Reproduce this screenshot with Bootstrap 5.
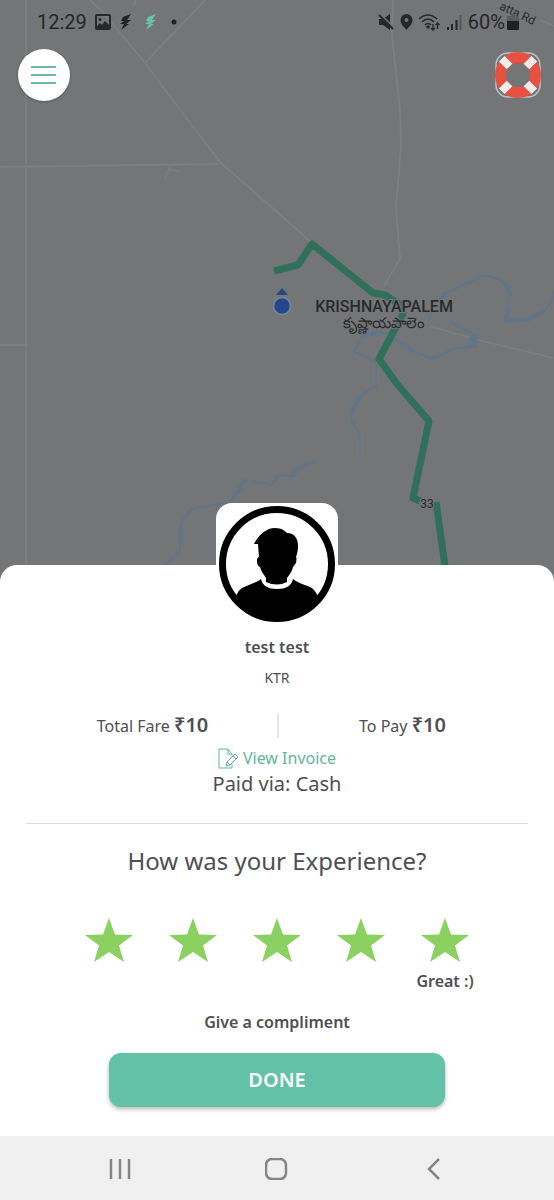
<!DOCTYPE html>
<html lang="en">
<head>
<meta charset="utf-8">
<meta name="viewport" content="width=device-width, initial-scale=1">
<title>Rate your ride</title>
<link href="https://cdn.jsdelivr.net/npm/bootstrap@5.3.0/dist/css/bootstrap.min.css" rel="stylesheet">
<style>
  body { font-family: "Noto Sans", "Liberation Sans", sans-serif; color: #4e4f53; background: #fff; }
  .screen { background: #737577; overflow: hidden; }
  .map-label { font-family: Roboto, "Noto Sans", sans-serif; fill: #292a2d; }
  .status { font-family: Roboto, sans-serif; font-size: 20px; line-height: 24px; color: #262729; padding: 10px 35px 0 37px; }
  .status-icons { gap: 6px; }
  .status-end { gap: 2px; }
  .tools { padding: 15px 13px 0 18px; }
  .menu-btn { width: 52px; height: 52px; background: #fff; box-shadow: 0 1px 3px rgba(0,0,0,.25); }
  .sheet { background: #fff; border-radius: 17px 17px 0 0; padding: 0 26px 29px; }
  .avatar { width: 122px; height: 122px; margin-top: -62px; border-radius: 16px; background: #fff; }
  .t-small { font-size: 14px; line-height: 20px; }
  .t-body { font-size: 16px; line-height: 20px; }
  .t-strong { font-weight: 600; }
  .t-price { font-size: 20px; line-height: 24px; font-weight: 600; }
  .t-link { font-size: 16px; line-height: 24px; color: #62b59a; }
  .t-paid { font-size: 20px; line-height: 28px; }
  .t-question { font-size: 24px; line-height: 32px; font-weight: 400; }
  .driver { margin-top: 12px; }
  .vehicle { margin-top: 11px; }
  .fares { padding: 0 2px; margin-top: 25px; }
  .fare-cell + .fare-cell { border-left: 2px solid #e6e6e8; }
  .rule { border-top: 1px solid #dedee0; opacity: 1; margin: 25px 0 21px; }
  .stars { max-width: 420px; margin-top: 41px; }
  .rating-note { margin-top: 9px; }
  .compliment { margin-top: 21px; }
  .done { width: 67%; height: 54px; border-radius: 12px; background: #62c1a6; color: #fff; font-size: 20px; font-weight: 600; box-shadow: 0 2px 4px rgba(0,0,0,.3); margin-top: 21px; }
  .done:hover { background: #55b498; color: #fff; }
  .sysnav { background: #f0f0f0; height: 64px; padding: 0 41px; }
</style>
</head>
<body>
<div class="screen position-relative min-vh-100 d-flex flex-column">

  <svg class="position-absolute top-0 start-0 w-100 h-100" viewBox="0 0 554 1200" preserveAspectRatio="xMidYMin slice" role="img" aria-label="Route map">
    <g fill="none" stroke="#7c7e80" stroke-width="2">
      <path d="M26 0V580M0 167L218 164M0 345H28M90 0L103 12L145 63L181 111L221 163L277 212L313 244M205 0L145 63M136 0L134 6M393 0L392 35L400 110L401 145L396 210L400 259L384 286"/>
      <path d="M430 326L478 340L554 358M540 20L554 26M169 167L165 180M169 169L180 172" stroke-width="1.500"/>
    </g>
    <g fill="none" stroke="#60758a" stroke-width="2" stroke-linejoin="round">
      <path d="M429 321L434 306L444 294L484 275L502 280L510 295L505 321L529 320L544 312L551 302L554 291"/>
      <path d="M450 322L472 333L473 346L453 349L433 359L413 351L391 337M391 334L376 332L362 337L354 352L376 361L376 386L360 396L351 414V421L360 434V456"/>
      <path d="M314 461L299 468L292 476L278 475L272 485L252 481M246 479L231 502L191 509L181 523L180 551L165 565L155 575"/>
      <path d="M246 479L236 494M505 320L510 308M505 321L529 319L544 311M510 295L506 281M181 526L181 545M307 464L299 468L292 476M362 336L378 332M391 337L413 351M444 294L440 303M360 396L351 414" stroke-width="4" stroke-linejoin="bevel"/>
      <path d="M473 334V348" stroke-width="7"/>
    </g>
    <g fill="none" stroke="#30705a" stroke-width="7" stroke-linejoin="round">
      <path d="M274 271L298 265L312 244L373 293L385 295L402 306L403 314L379 359L397 384L429 421L413 498L420 501"/>
      <path d="M436 502L447 580"/>
    </g>
    <circle cx="282" cy="306" r="8.500" fill="#254789" stroke="#77899f" stroke-width="1.500"/>
    <path d="M276 295L282 288L288 295Z" fill="#294783"/>
    <g class="map-label" text-anchor="middle" stroke="#737577" stroke-width="2" paint-order="stroke">
      <text x="384" y="312" font-size="16" font-weight="500">KRISHNAYAPALEM</text>
      <text x="384" y="328" font-size="15">కృష్ణాయపాలెం</text>
      <text x="427" y="508" font-size="12">33</text>
      <text x="516" y="17" font-size="12" transform="rotate(25 516 17)">atta Rd</text>
    </g>
  </svg>

  <header class="position-relative">
    <div class="status d-flex align-items-center justify-content-between">
      <div class="d-flex align-items-center gap-2">
        <span>12:29</span>
        <svg width="16" height="16" viewBox="0 0 16 16"><path fill="#262729" fill-rule="evenodd" d="M2 0H14Q16 0 16 2V14Q16 16 14 16H2Q0 16 0 14V2Q0 0 2 0ZM2 2V12L5 9L7 11L10 7L14 11V2ZM5 4A1.500 1.500 0 1 1 5 7A1.500 1.500 0 1 1 5 4Z"/></svg>
        <svg width="13" height="16" viewBox="0 0 13 16"><path fill="#202124" d="M12 0L4 3L2 7H5L1 10H5L2 16L10 10H7L12 6H8Z"/></svg>
        <svg class="ms-1" width="13" height="16" viewBox="0 0 13 16"><path fill="#65c3a7" d="M12 0L4 3L2 7H5L1 10H5L2 16L10 10H7L12 6H8Z"/></svg>
        <svg class="ms-1" width="8" height="8" viewBox="0 0 8 8"><circle cx="5" cy="4" r="2.500" fill="#202124"/></svg>
      </div>
      <div class="status-icons d-flex align-items-center">
        <svg width="16" height="16" viewBox="0 0 16 16"><path fill="#262729" d="M1 5H5L12 0V16L5 11H1Z"/><path d="M2 0L16 14" stroke="#737577" stroke-width="2"/><path d="M1 1L15 15" stroke="#262729" stroke-width="2"/></svg>
        <svg width="13" height="16" viewBox="0 0 13 16"><path fill="#262729" fill-rule="evenodd" d="M6.500 0A6 6 0 0 1 12.500 6C12.500 10 9 13 6.500 16C4 13 .5 10 .5 6A6 6 0 0 1 6.500 0ZM6.500 4A2 2 0 1 0 6.500 8A2 2 0 1 0 6.500 4Z"/></svg>
        <svg width="22" height="18" viewBox="0 0 22 18" fill="none" stroke="#262729" stroke-width="1.600"><path d="M0 6Q9-2 18 6M3 9Q9 3 15 9M6 12Q9 9 12 12"/><circle cx="9" cy="14" r="1" fill="#262729"/><path d="M14 11V17M12 15L14 17L16 15M18.500 16V10M16.500 12L18.500 10L20.500 12" stroke-width="1.300"/></svg>
        <svg width="15" height="16" viewBox="0 0 15 16" stroke-width="2"><path stroke="#262729" d="M1 13V16M5 10V16M9.500 6V16"/><path stroke="#55575a" d="M13.500 1V16"/></svg>
        <div class="status-end d-flex align-items-center">
          <span>60%</span>
          <svg width="12" height="16" viewBox="0 0 12 16"><path fill="#5a5c5e" d="M4 0H8V2H12V7H0V2H4Z"/><path fill="#202124" d="M0 7H12V15Q12 16 11 16H1Q0 16 0 15Z"/></svg>
        </div>
      </div>
    </div>
    <div class="tools d-flex align-items-center justify-content-between">
      <button type="button" class="menu-btn btn rounded-circle border-0 p-0 d-flex align-items-center justify-content-center" aria-label="Menu">
        <svg width="26" height="20" viewBox="0 0 26 20"><path d="M0 2H25M0 10H25M0 18H25" stroke="#6bb9a2" stroke-width="2"/></svg>
      </button>
      <button type="button" class="btn border-0 p-0 lh-1" aria-label="Help">
        <svg width="46" height="48" viewBox="-23 -24 46 48">
          <rect x="-22" y="-22" width="44" height="44" rx="12" fill="none" stroke="#b9c4c4" stroke-width="1.500"/>
          <circle r="17.500" fill="none" stroke="#e65142" stroke-width="11"/>
          <g transform="rotate(45)" fill="#f1eceb"><path d="M-4-23H4V-12H-4ZM-4 12H4V23H-4ZM-23-4H-12V4H-23ZM12-4H23V4H12Z"/></g>
        </svg>
      </button>
    </div>
  </header>

  <main class="sheet position-relative mt-auto d-flex flex-column align-items-center">
    <svg class="avatar flex-shrink-0" viewBox="0 0 122 122" role="img" aria-label="Driver photo">
      <clipPath id="ring"><circle cx="61" cy="61" r="57"/></clipPath>
      <circle cx="61" cy="61" r="54.500" fill="#fff" stroke="#000" stroke-width="7"/>
      <g clip-path="url(#ring)">
        <path d="M38 41C43 31 51 25 59 25C66 25 69 28 71 30C79 30 82 36 82 43C82 48 81 51 80 54Q81 55 80 60L77 64C76 69 73 72 71 75V79Q61 84 50 79V75C48 72 45 68 44 64Q41 63 41 58Q41 54 43 54L42 41Z"/>
        <path d="M45 76Q47 86 61 86Q75 86 77 76C83 81 91 82 96 85Q102 90 104 101V122H18V101Q20 89 26 85C32 82 40 80 45 76Z"/>
      </g>
    </svg>

    <div class="driver t-body t-strong">test test</div>
    <div class="vehicle t-small">KTR</div>

    <div class="fares row g-0 w-100 text-center">
      <div class="fare-cell col-6"><span class="t-body">Total Fare</span> <span class="t-price">₹10</span></div>
      <div class="fare-cell col-6"><span class="t-body">To Pay</span> <span class="t-price">₹10</span></div>
    </div>
    <a href="#invoice" class="t-link text-decoration-none d-flex align-items-center gap-1 mt-2">
      <svg width="21" height="21" viewBox="0 0 21 21" fill="none" stroke="#62b59a" stroke-width="1"><path d="M14 16V20H1V1H10L14 6V8M10 1V6H14M8 18L9 14L17 6L20 9L12 17ZM15 8L18 11M9 14L12 17"/></svg>
      <span>View Invoice</span>
    </a>
    <div class="t-paid">Paid via: Cash</div>

    <hr class="rule w-100">

    <h1 class="t-question m-0 text-center">How was your Experience?</h1>
    <svg class="d-none"><symbol id="star" viewBox="0 0 48 44"><path fill="#8bd162" d="M24 0L30 16.500L48 17L34 27.500L39 44L24 34L9 44L14 27.500L0 17L18 16.500Z"/></symbol></svg>
    <div class="stars row g-0 w-100 text-center" role="radiogroup" aria-label="Rating">
      <div class="col"><input class="btn-check" type="radio" name="rating" id="r1"><label for="r1" class="d-block" aria-label="1 star"><svg class="d-block mx-auto" width="48" height="44"><use href="#star"/></svg></label></div>
      <div class="col"><input class="btn-check" type="radio" name="rating" id="r2"><label for="r2" class="d-block" aria-label="2 stars"><svg class="d-block mx-auto" width="48" height="44"><use href="#star"/></svg></label></div>
      <div class="col"><input class="btn-check" type="radio" name="rating" id="r3"><label for="r3" class="d-block" aria-label="3 stars"><svg class="d-block mx-auto" width="48" height="44"><use href="#star"/></svg></label></div>
      <div class="col"><input class="btn-check" type="radio" name="rating" id="r4"><label for="r4" class="d-block" aria-label="4 stars"><svg class="d-block mx-auto" width="48" height="44"><use href="#star"/></svg></label></div>
      <div class="col"><input class="btn-check" type="radio" name="rating" id="r5" checked><label for="r5" class="d-block"><svg class="d-block mx-auto" width="48" height="44"><use href="#star"/></svg><span class="rating-note t-body t-strong d-block">Great :)</span></label></div>
    </div>
    <div class="compliment t-body t-strong">Give a compliment</div>
    <button type="button" class="done btn border-0 p-0">DONE</button>
  </main>

  <nav class="sysnav position-relative d-flex align-items-center" aria-label="System">
    <div class="row g-0 w-100 text-center">
      <div class="col"><button type="button" class="btn border-0 p-0 lh-1" aria-label="Recent apps"><svg width="22" height="22" viewBox="0 0 22 22"><path d="M2 1V21M11 1V21M20 1V21" stroke="#858585" stroke-width="2.500"/></svg></button></div>
      <div class="col"><button type="button" class="btn border-0 p-0 lh-1" aria-label="Home"><svg width="24" height="22" viewBox="0 0 24 22"><rect x="1" y="1" width="20" height="20" rx="6" fill="none" stroke="#858585" stroke-width="2.500"/></svg></button></div>
      <div class="col"><button type="button" class="btn border-0 p-0 lh-1" aria-label="Back"><svg width="14" height="22" viewBox="0 0 14 22"><path d="M12 1L2 11L12 21" fill="none" stroke="#858585" stroke-width="2.500"/></svg></button></div>
    </div>
  </nav>
</div>
<script src="https://cdn.jsdelivr.net/npm/bootstrap@5.3.0/dist/js/bootstrap.bundle.min.js"></script>
</body>
</html>
